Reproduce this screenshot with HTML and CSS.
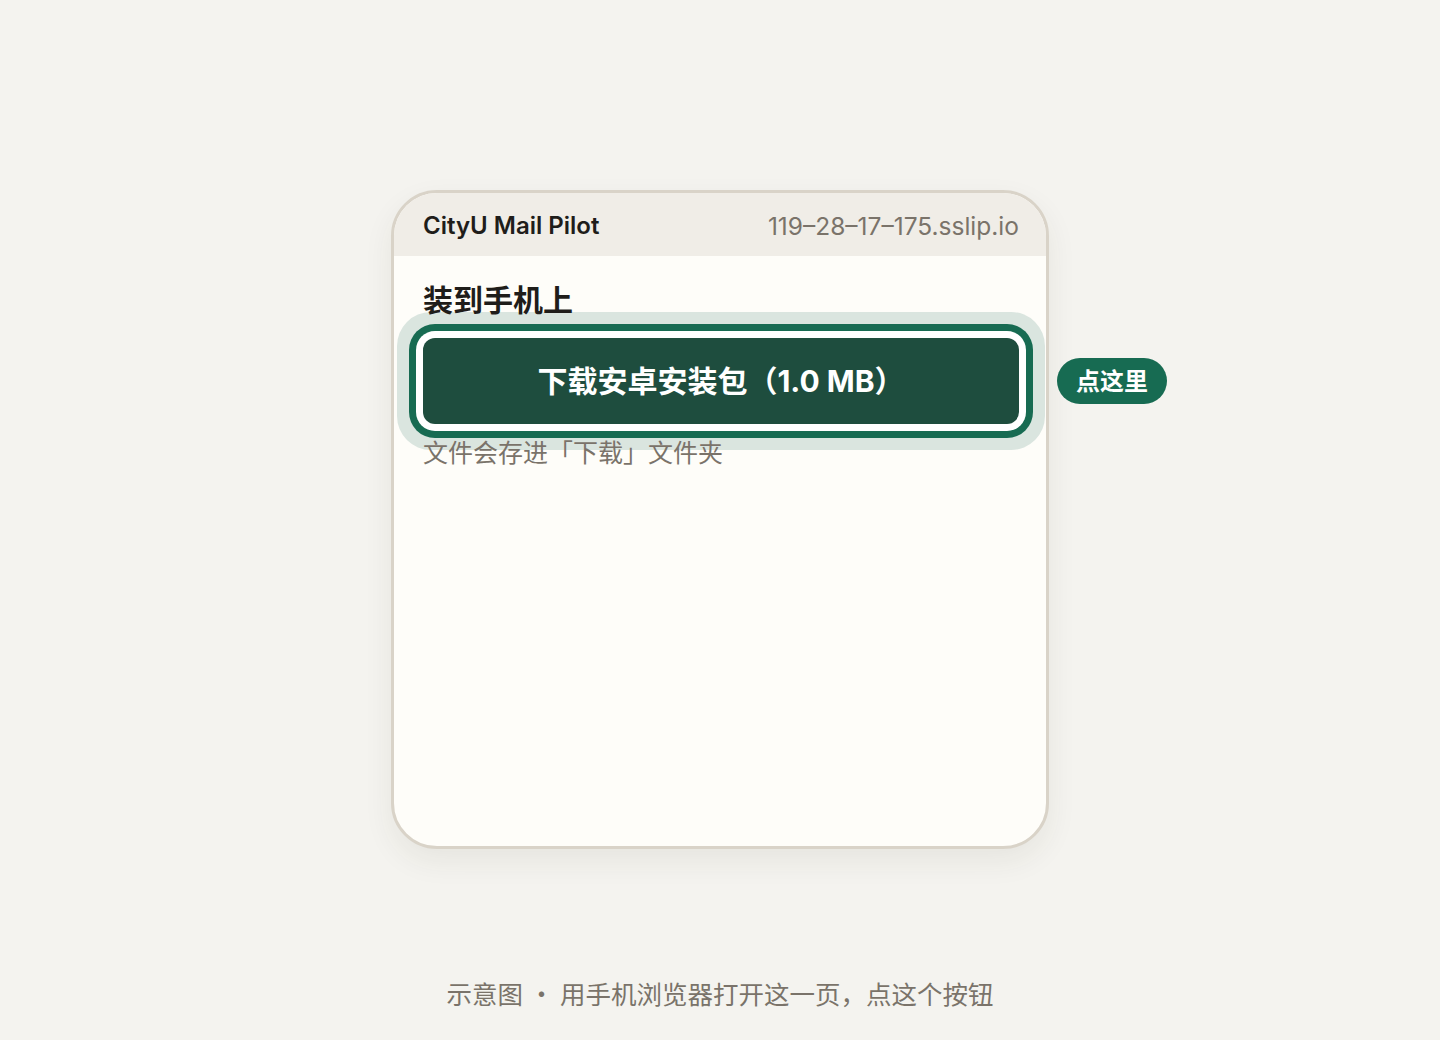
FILE: index.html
```html
<!DOCTYPE html>
<html lang="zh-CN">
<head>
<meta charset="utf-8">
<title>示意图</title>
<link rel="stylesheet" href="styles.css">
</head>
<body>
<main class="stage">
  <div class="phone-wrap">
    <section class="phone">
      <header class="phone-head">
        <span class="app-name">CityU Mail Pilot</span>
        <span class="host">119–28–17–175.sslip.io</span>
      </header>
      <div class="phone-body">
        <h1 class="title">装到手机上</h1>
        <div class="btn-row">
          <a class="dl-btn">下载安卓安装包（1.0 MB）</a>
        </div>
        <p class="caption">文件会存进「下载」文件夹</p>
      </div>
    </section>
    <span class="badge">点这里</span>
  </div>
  <p class="footnote">示意图 · 用手机浏览器打开这一页，点这个按钮</p>
</main>
</body>
</html>
```

FILE: styles.css
```css
* { box-sizing: border-box; }
html, body { margin: 0; padding: 0; }
body {
  background: #f4f3ef;
  font-family: "Inter", "Noto Sans CJK SC", sans-serif;
  width: 1440px;
  height: 1040px;
  overflow: hidden;
}
.stage {
  display: flex;
  flex-direction: column;
  align-items: center;
  padding-top: 190px;
}
.phone-wrap {
  position: relative;
  width: 658px;
}
.phone {
  width: 658px;
  height: 659px;
  border: 3px solid #d9d3c8;
  border-radius: 46px;
  background: #fefdf9;
  overflow: hidden;
  box-shadow: 0 12px 30px rgba(60, 50, 30, 0.07);
}
.phone-head {
  height: 63px;
  background: #f0ede7;
  display: flex;
  align-items: center;
  justify-content: space-between;
  padding: 2px 27px 0 29px;
}
.app-name {
  font-size: 24px;
  font-weight: 600;
  color: #1f1d1a;
}
.host {
  font-size: 24.5px;
  color: #7a736a;
}
.phone-body {
  padding: 24px 27px 0 29px;
}
.title {
  margin: 0;
  font-size: 30px;
  line-height: 36px;
  font-weight: 700;
  color: #1f1d1a;
  font-family: "Noto Sans CJK SC", sans-serif;
}
.btn-row {
  margin-top: 22px;
}
.dl-btn {
  display: flex;
  align-items: center;
  justify-content: center;
  height: 86px;
  width: 596px;
  padding-bottom: 4px;
  background: #1e4d3e;
  color: #ffffff;
  border-radius: 12px;
  font-size: 30px;
  font-weight: 700;
  box-shadow: 0 0 0 7px #ffffff, 0 0 0 14px #176b52, 0 0 0 26px #dae5df;
}
.caption {
  margin: 12px 0 0;
  font-size: 25px;
  line-height: 30px;
  color: #7a736a;
  position: relative;
  font-family: "Noto Sans CJK SC", sans-serif;
}
.badge {
  position: absolute;
  left: 666px;
  top: 168px;
  height: 46px;
  padding: 0 19px 3px;
  display: flex;
  align-items: center;
  white-space: nowrap;
  background: #176b52;
  color: #ffffff;
  border-radius: 23px;
  font-size: 24px;
  font-weight: 700;
  font-family: "Noto Sans CJK SC", sans-serif;
}
.footnote {
  margin: 127px 0 0;
  font-size: 25.5px;
  line-height: 34px;
  color: #7a736a;
  font-family: "Noto Sans CJK SC", sans-serif;
}
```
